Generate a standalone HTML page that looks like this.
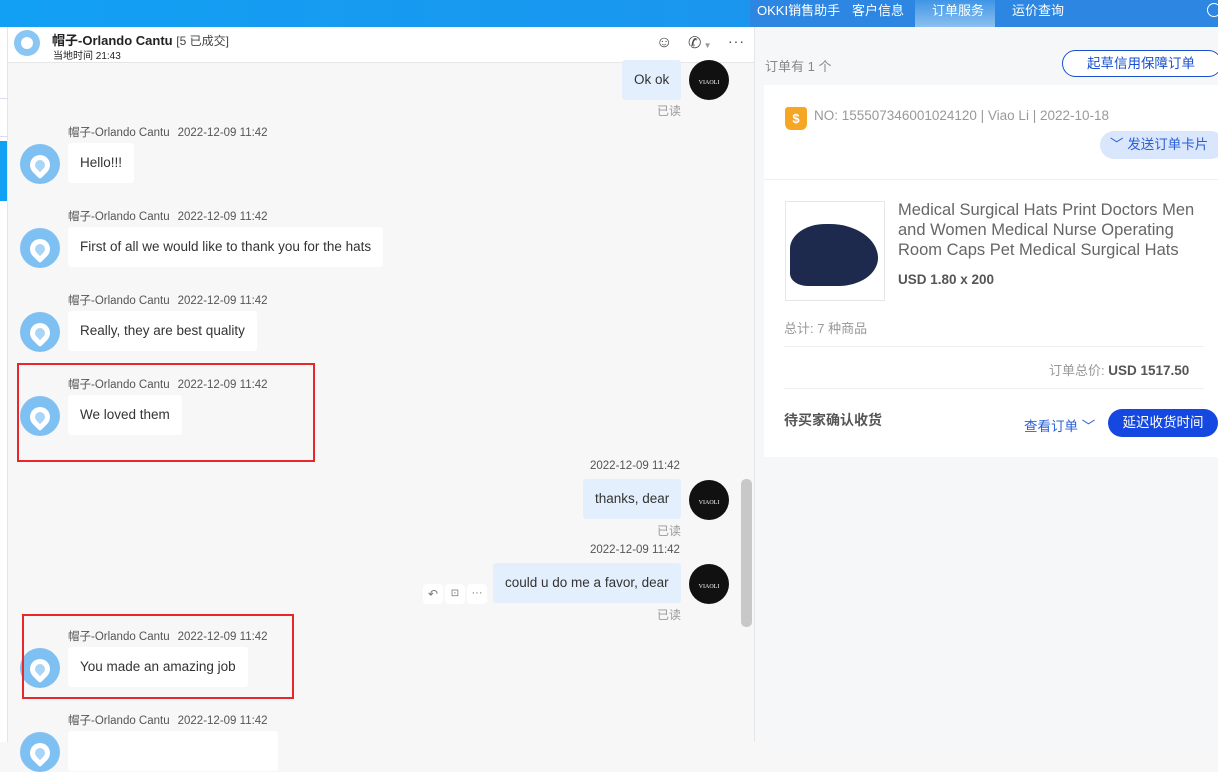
<!DOCTYPE html>
<html><head><meta charset="utf-8"><style>
*{margin:0;padding:0;box-sizing:border-box}
body{width:1218px;height:742px;overflow:hidden;position:relative;background:#f7f7f7;font-family:"Liberation Sans","Noto Sans CJK SC",sans-serif;color:#333}
.a{position:absolute}
.top{left:0;top:0;width:1218px;height:27px;background:linear-gradient(90deg,#12a0f4,#1a96ee 60%,#2a86e2)}
.nav{top:0;height:27px;line-height:22px;color:#fff;font-size:13px}
.av{width:40px;height:40px;border-radius:50%;background:#7fc0f3}
.av:after{content:"";position:absolute;left:10px;top:11px;width:20px;height:20px;border-radius:50% 50% 50% 10%;border:5px solid #fff;background:#a9d5f7;box-sizing:border-box;transform:rotate(-45deg)}
.nm{font-size:11.5px;color:#555}
.nm span{margin-left:8px}
.bin{background:#fff;border-radius:3px;height:40px;line-height:40px;padding:0 12px;font-size:13.5px;color:#333}
.bout{background:#e3effd;border-radius:3px;height:40px;line-height:40px;padding:0 12px;font-size:13.5px;color:#333}
.va{width:40px;height:40px;border-radius:50%;background:#111;color:#fff;font-size:6px;text-align:center;padding-top:20px;font-family:"Liberation Serif",serif}
.rd{font-size:12px;color:#999}
.red{border:2px solid #e8272b}
</style></head><body>
<div class="a top"></div>
<div class="a" style="left:750px;top:0;width:468px;height:27px;background:#2d87e2"></div>
<div class="a" style="left:915px;top:0;width:80px;height:27px;background:linear-gradient(#3f95e6,#8cc0f0)"></div>
<div class="a nav" style="left:757px">OKKI销售助手</div>
<div class="a nav" style="left:852px">客户信息</div>
<div class="a nav" style="left:932px">订单服务</div>
<div class="a nav" style="left:1012px">运价查询</div>
<div class="a" style="left:1207px;top:3px;width:14px;height:14px;border:1.5px solid #fff;border-radius:50%"></div>

<div class="a" style="left:0;top:27px;width:8px;height:715px;background:#fff;border-right:1px solid #e5e5e5"></div>
<div class="a" style="left:0;top:98px;width:8px;height:1px;background:#dde"></div>
<div class="a" style="left:0;top:136px;width:8px;height:1px;background:#dde"></div>
<div class="a" style="left:0;top:141px;width:7px;height:60px;background:#12a0f4"></div>

<div class="a" style="left:8px;top:27px;width:746px;height:36px;background:#fff;border-bottom:1px solid #e6e6e6"></div>
<div class="a" style="left:14px;top:30px;width:26px;height:26px;border-radius:50%;background:#8ac6f3"><div class="a" style="left:7px;top:7px;width:12px;height:12px;border-radius:50%;background:#fff"></div></div>
<div class="a" style="left:52px;top:30px;font-size:13px;color:#222"><b>帽子-Orlando Cantu</b> <span style="font-size:12px;color:#444">[5 已成交]</span></div>
<div class="a" style="left:53px;top:47px;font-size:10px;color:#222">当地时间 21:43</div>
<div class="a" style="left:656px;top:34px;font-size:16px;color:#444">&#9786;</div>
<div class="a" style="left:688px;top:33px;font-size:16px;color:#444">&#9990;<span style="font-size:8px;color:#999"> ▼</span></div>
<div class="a" style="left:728px;top:33px;font-size:14px;color:#444;letter-spacing:1px">···</div>

<div class="a bout" style="left:622px;top:60px">Ok ok</div>
<div class="a va" style="left:689px;top:60px">VIAOLI</div>
<div class="a rd" style="left:657px;top:102px">已读</div>

<div class="a nm" style="left:68px;top:124px">帽子-Orlando Cantu<span>2022-12-09 11:42</span></div>
<div class="a av" style="left:20px;top:144px"></div>
<div class="a bin" style="left:68px;top:143px">Hello!!!</div>

<div class="a nm" style="left:68px;top:208px">帽子-Orlando Cantu<span>2022-12-09 11:42</span></div>
<div class="a av" style="left:20px;top:228px"></div>
<div class="a bin" style="left:68px;top:227px">First of all we would like to thank you for the hats</div>

<div class="a nm" style="left:68px;top:292px">帽子-Orlando Cantu<span>2022-12-09 11:42</span></div>
<div class="a av" style="left:20px;top:312px"></div>
<div class="a bin" style="left:68px;top:311px">Really, they are best quality</div>

<div class="a nm" style="left:68px;top:376px">帽子-Orlando Cantu<span>2022-12-09 11:42</span></div>
<div class="a av" style="left:20px;top:396px"></div>
<div class="a bin" style="left:68px;top:395px">We loved them</div>
<div class="a red" style="left:17px;top:363px;width:298px;height:99px"></div>

<div class="a nm" style="left:590px;top:460px">2022-12-09 11:42</div>
<div class="a bout" style="left:583px;top:479px">thanks, dear</div>
<div class="a va" style="left:689px;top:480px">VIAOLI</div>
<div class="a rd" style="left:657px;top:522px">已读</div>

<div class="a nm" style="left:590px;top:544px">2022-12-09 11:42</div>
<div class="a bout" style="left:493px;top:563px">could u do me a favor, dear</div>
<div class="a va" style="left:689px;top:564px">VIAOLI</div>
<div class="a rd" style="left:657px;top:606px">已读</div>
<div class="a" style="left:423px;top:584px;width:20px;height:20px;background:#fff;border-radius:4px;font-size:12px;color:#777;text-align:center;line-height:20px">↶</div>
<div class="a" style="left:445px;top:584px;width:20px;height:20px;background:#fff;border-radius:4px;font-size:10px;color:#777;text-align:center;line-height:20px">⊡</div>
<div class="a" style="left:467px;top:584px;width:20px;height:20px;background:#fff;border-radius:4px;font-size:11px;color:#777;text-align:center;line-height:18px">···</div>

<div class="a nm" style="left:68px;top:628px">帽子-Orlando Cantu<span>2022-12-09 11:42</span></div>
<div class="a av" style="left:20px;top:648px"></div>
<div class="a bin" style="left:68px;top:647px">You made an amazing job</div>
<div class="a red" style="left:22px;top:614px;width:272px;height:85px"></div>

<div class="a nm" style="left:68px;top:712px">帽子-Orlando Cantu<span>2022-12-09 11:42</span></div>
<div class="a av" style="left:20px;top:732px"></div>
<div class="a bin" style="left:68px;top:731px;width:210px"></div>

<div class="a" style="left:741px;top:479px;width:11px;height:148px;background:#c8c8c8;border-radius:5px"></div>

<div class="a" style="left:754px;top:27px;width:464px;height:715px;background:#f6f7f9;border-left:1px solid #e6e6e6"></div>
<div class="a" style="left:765px;top:56px;font-size:13px;color:#888">订单有 1 个</div>
<div class="a" style="left:1062px;top:50px;width:160px;height:27px;border:1px solid #1a4fd0;border-radius:14px;background:#fff;color:#1a4fd0;font-size:13.5px;line-height:25px;padding-left:24px">起草信用保障订单</div>
<div class="a" style="left:764px;top:85px;width:454px;height:372px;background:#fff"></div>
<div class="a" style="left:785px;top:107px;width:22px;height:23px;background:#f5a623;border-radius:3px 3px 6px 6px;color:#fff;font-size:13px;text-align:center;line-height:23px;font-weight:bold">$</div>
<div class="a" style="left:814px;top:108px;font-size:13.5px;color:#999">NO: 155507346001024120 | Viao Li | 2022-10-18</div>
<div class="a" style="left:1100px;top:131px;width:125px;height:28px;background:#d9e6fb;border-radius:14px;color:#2a5fd6;font-size:13.5px;line-height:28px;padding-left:10px">﹀ 发送订单卡片</div>
<div class="a" style="left:764px;top:179px;width:454px;height:1px;background:#eee"></div>
<div class="a" style="left:785px;top:201px;width:100px;height:100px;border:1px solid #e6e6e6;background:#fff"><div class="a" style="left:4px;top:22px;width:88px;height:62px;background:#1d2a4d;border-radius:40% 55% 45% 20%"></div></div>
<div class="a" style="left:898px;top:200px;width:310px;font-size:16.5px;line-height:20px;color:#666">Medical Surgical Hats Print Doctors Men and Women Medical Nurse Operating Room Caps Pet Medical Surgical Hats</div>
<div class="a" style="left:898px;top:272px;font-size:13.5px;font-weight:bold;color:#555">USD 1.80 x 200</div>
<div class="a" style="left:784px;top:318px;font-size:13px;color:#999">总计: 7 种商品</div>
<div class="a" style="left:784px;top:346px;width:420px;height:1px;background:#eee"></div>
<div class="a" style="left:1049px;top:360px;font-size:13px;color:#999">订单总价: <b style="color:#555;font-size:13.5px">USD 1517.50</b></div>
<div class="a" style="left:784px;top:388px;width:420px;height:1px;background:#eee"></div>
<div class="a" style="left:784px;top:410px;font-size:14px;font-weight:bold;color:#555">待买家确认收货</div>
<div class="a" style="left:1024px;top:415px;font-size:13.5px;color:#2a5fd6">查看订单 ﹀</div>
<div class="a" style="left:1108px;top:409px;width:110px;height:28px;background:#1448e0;border-radius:14px;color:#fff;font-size:13.5px;line-height:28px;text-align:center">延迟收货时间</div>
</body></html>
